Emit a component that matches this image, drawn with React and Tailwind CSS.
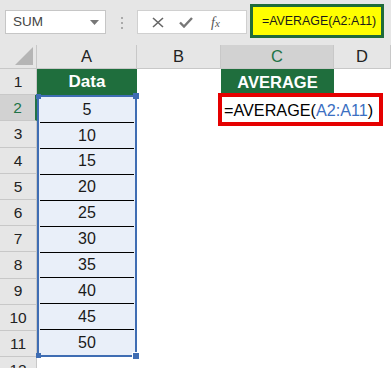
import React from "react"

const data = [5, 10, 15, 20, 25, 30, 35, 40, 45, 50]
const font = { fontFamily: '"Liberation Sans", Arial, sans-serif' }

function Toolbar() {
  return (
    <div className="flex h-[45px] items-start bg-[#e6e6e6]">
      <div className="ml-[5px] mt-[10px] flex h-[24px] w-[101px] items-center justify-between border border-[#c6c6c6] bg-white pl-[7px] pr-[6px]">
        <span className="text-[13.5px] text-[#444]">SUM</span>
        <svg width="9" height="5" viewBox="0 0 9 5">
          <path d="M0 0h9L4.5 5z" fill="#777" />
        </svg>
      </div>
      <div className="ml-[15px] mt-[17px] flex flex-col gap-[3px]">
        <div className="h-[2px] w-[2px] bg-[#aaa]" />
        <div className="h-[2px] w-[2px] bg-[#aaa]" />
        <div className="h-[2px] w-[2px] bg-[#aaa]" />
      </div>
      <div className="ml-[14px] mt-[10px] flex h-[24px] w-[110px] items-center border border-[#d0d0d0] bg-white">
        <svg className="ml-[14px]" width="12" height="11" viewBox="0 0 12 11">
          <path d="M1 1l10 9M11 1L1 10" stroke="#666" strokeWidth="1.6" />
        </svg>
        <svg className="ml-[15px]" width="14" height="11" viewBox="0 0 14 11">
          <path d="M1 5.5l4 4L13 1" stroke="#777" strokeWidth="2.4" fill="none" />
        </svg>
        <span
          className="ml-[18px] text-[14px] italic text-[#555]"
          style={{ fontFamily: '"Liberation Serif", serif' }}
        >
          f<span className="text-[11px]">x</span>
        </span>
      </div>
      <div className="ml-[3px] mt-[4px] flex h-[34px] w-[134px] items-center border-[3px] border-[#1f6b3a] bg-[#ffff00] pl-[9px]">
        <span className="whitespace-nowrap text-[12.4px] text-[#1a1a1a]">=AVERAGE(A2:A11)</span>
      </div>
    </div>
  )
}

function ColHeader({ label, selected }) {
  return (
    <div
      className={
        "flex items-center justify-center border-b border-r border-[#c8c8c8] text-[16.5px] " +
        (selected ? "bg-[#d2d2d2] text-[#217346]" : "bg-[#e6e6e6] text-[#222]")
      }
    >
      {label}
    </div>
  )
}

function RowHeader({ n, selected }) {
  return (
    <div
      className={
        "flex items-center justify-center border-b text-[15.5px] " +
        (selected
          ? "border-b-[#c8c8c8] border-r-2 border-r-[#217346] bg-[#d2d2d2] text-[#217346]"
          : "border-r border-[#c8c8c8] bg-[#e6e6e6] text-[#222]")
      }
    >
      {n}
    </div>
  )
}

export default function App() {
  return (
    <div className="h-[368px] w-[391px] overflow-hidden bg-white" style={font}>
      <Toolbar />
      <div className="grid grid-cols-[37px_100px_84px_113px_1fr] grid-rows-[24px_repeat(12,26.2px)]">
        <div className="relative border-b border-r border-[#c8c8c8] bg-[#e6e6e6]">
          <svg className="absolute bottom-[3px] right-[3px]" width="18" height="18" viewBox="0 0 18 18">
            <path d="M18 0V18H0z" fill="#b5b5b5" />
          </svg>
        </div>
        <ColHeader label="A" />
        <ColHeader label="B" />
        <ColHeader label="C" selected />
        <ColHeader label="D" />

        {/* row 1 */}
        <RowHeader n={1} />
        <div className="flex items-center justify-center bg-[#1f6e3d] text-[17px] font-bold text-white">
          Data
        </div>
        <div />
        <div className="flex items-center justify-center bg-[#1f6e3d] text-[16.5px] font-bold text-white">
          AVERAGE
        </div>
        <div />

        {/* row 2 */}
        <RowHeader n={2} selected />
        <div className="relative col-start-2 row-span-10 flex flex-col border-2 border-[#3f6db3] bg-[#e9eff9]">
          {data.map((v, i) => (
            <div
              key={v}
              className={
                "flex flex-1 items-center justify-center text-[16px] text-[#1a1a1a] " +
                (i < data.length - 1 ? "mx-px border-b-[1.5px] border-black" : "")
              }
            >
              {v}
            </div>
          ))}
          <div className="absolute -left-[3px] -top-[3px] h-[5px] w-[5px] bg-[#3f6db3]" />
          <div className="absolute -right-[4px] -top-[4px] h-[6px] w-[6px] bg-[#3f6db3]" />
          <div className="absolute -bottom-[3px] -left-[3px] h-[5px] w-[5px] bg-[#3f6db3]" />
          <div className="absolute -bottom-[5px] -right-[5px] h-[8px] w-[8px] border border-white bg-[#3f6db3]" />
        </div>
        <div />
        <div className="relative">
          <div className="absolute -left-[3px] -top-[2px] z-10 flex h-[33px] w-[165px] items-center whitespace-nowrap border-[4px] border-[#e50000] bg-white pl-[2px] text-[16.2px] text-black">
            =AVERAGE(<span className="text-[#3b6fc2]">A2:A11</span>)
          </div>
        </div>
        <div />

        {[3, 4, 5, 6, 7, 8, 9, 10, 11].map((n) => (
          <React.Fragment key={n}>
            <RowHeader n={n} />
            <div className="col-start-3" />
            <div />
            <div />
          </React.Fragment>
        ))}

        <RowHeader n={12} />
        <div />
        <div />
        <div />
        <div />
      </div>
    </div>
  )
}
